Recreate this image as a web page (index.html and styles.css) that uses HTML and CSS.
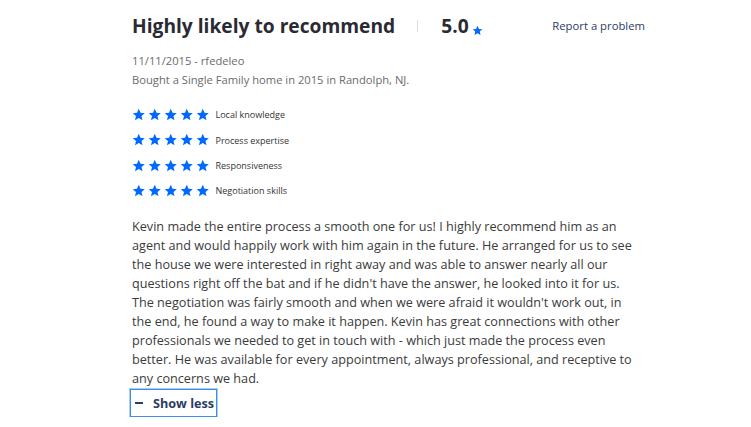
FILE: index.html
```html
<!DOCTYPE html>
<html>
<head>
<meta charset="utf-8">
<link rel="stylesheet" href="styles.css">
</head>
<body>
<div class="review">
  <div class="header">
    <h2 class="title">Highly likely to recommend</h2>
    <span class="sep"></span>
    <span class="score">5.0</span>
    <svg class="star small" viewBox="0 0 24 24"><path d="M12 1.5l3.1 7.1 7.6.7-5.8 5 1.8 7.5L12 17.8l-6.7 4 1.8-7.5-5.8-5 7.6-.7z"/></svg>
    <a class="report">Report a problem</a>
  </div>
  <div class="meta first">11/11/2015 - rfedeleo</div>
  <div class="meta">Bought a Single Family home in 2015 in Randolph, NJ.</div>
  <div class="ratings">
    <div class="rating"><span class="stars"></span><span class="label">Local knowledge</span></div>
    <div class="rating"><span class="stars"></span><span class="label">Process expertise</span></div>
    <div class="rating"><span class="stars"></span><span class="label">Responsiveness</span></div>
    <div class="rating"><span class="stars"></span><span class="label">Negotiation skills</span></div>
  </div>
  <p class="body">Kevin made the entire process a smooth one for us! I highly recommend him as an agent and would happily work with him again in the future. He arranged for us to see the house we were interested in right away and was able to answer nearly all our questions right off the bat and if he didn't have the answer, he looked into it for us. The negotiation was fairly smooth and when we were afraid it wouldn't work out, in the end, he found a way to make it happen. Kevin has great connections with other professionals we needed to get in touch with - which just made the process even better. He was available for every appointment, always professional, and receptive to any concerns we had.</p>
  <button class="toggle"><span class="minus"></span>Show less</button>
</div>
<script>
document.querySelectorAll('.stars').forEach(function(s){
  for (var i=0;i<5;i++){
    s.insertAdjacentHTML('beforeend','<svg class="star" viewBox="0 0 24 24"><path d="M12 1.5l3.1 7.1 7.6.7-5.8 5 1.8 7.5L12 17.8l-6.7 4 1.8-7.5-5.8-5 7.6-.7z"/></svg>');
  }
});
</script>
</body>
</html>
```
FILE: styles.css
```css
html, body { margin: 0; padding: 0; background: #fff; }
body { font-family: "Open Sans", "Liberation Sans", sans-serif; color: #333; }
.review { width: 513px; padding: 13px 0 0 132px; }
.header { display: flex; align-items: baseline; }
.title { margin: 0; font-size: 19.2px; font-weight: 700; color: #2a2a33; line-height: 26px; }
.sep { display: inline-block; width: 1px; height: 12px; background: #ddd; margin: 0 23px 0 22px; align-self: center; }
.score { font-size: 19.2px; font-weight: 700; color: #2a2a33; line-height: 26px; }
.star { width: 13.5px; height: 13.5px; fill: #006aff; }
.star.small { width: 11px; height: 11px; margin-left: 3px; align-self: flex-end; margin-bottom: 3px; }
.report { margin-left: auto; align-self: flex-start; margin-top: 5px; line-height: 15px; font-size: 11.3px; color: #2a3d66; }
.meta { font-size: 11.2px; color: #6b6b6b; line-height: 19px; }
.meta.first { margin-top: 12px; }
.ratings { margin-top: 13px; }
.rating { display: flex; align-items: center; height: 25.4px; }
.stars { display: flex; gap: 2.5px; margin-right: 6px; }
.label { font-size: 9px; color: #333; }
.body { width: 506px; margin: 13px 0 0; font-size: 12.65px; line-height: 19px; color: #3b3b3b; }
.toggle { margin: 1px 0 0 -2px; padding: 4px 2px 4px 4px; border: 1px solid #3d8ee8; box-shadow: 0 0 0 1px #a8cdf5; background: #fff; font-family: inherit; font-size: 12.65px; font-weight: 700; color: #2a3d66; display: flex; align-items: center; }
.minus { display: inline-block; width: 8px; height: 2px; background: #2a3d66; margin-right: 10px; }
```
